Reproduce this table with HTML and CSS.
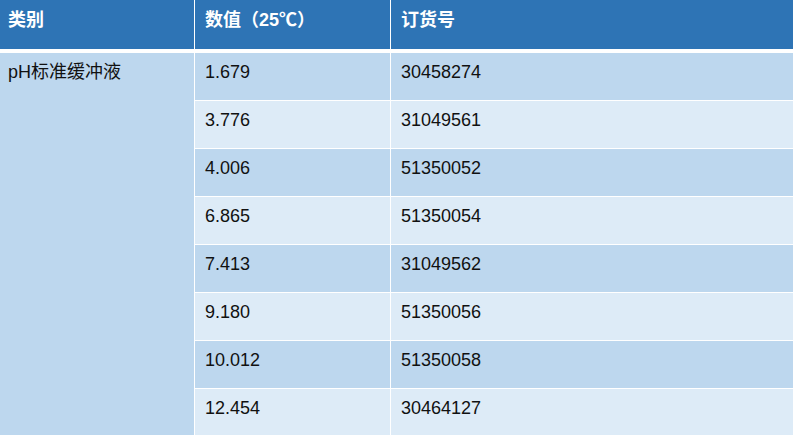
FILE: index.html
```html
<!DOCTYPE html>
<html lang="zh">
<head>
<meta charset="utf-8">
<link rel="stylesheet" href="styles.css">
</head>
<body>
<table class="grid">
  <colgroup>
    <col class="c1"><col class="c2"><col class="c3">
  </colgroup>
  <thead>
    <tr class="head">
      <th class="first">类别</th>
      <th>数值（25℃）</th>
      <th class="last">订货号</th>
    </tr>
  </thead>
  <tbody>
    <tr class="dark"><td class="cat first" rowspan="8">pH标准缓冲液</td><td>1.679</td><td class="last">30458274</td></tr>
    <tr class="light"><td>3.776</td><td class="last">31049561</td></tr>
    <tr class="dark"><td>4.006</td><td class="last">51350052</td></tr>
    <tr class="light"><td>6.865</td><td class="last">51350054</td></tr>
    <tr class="dark"><td>7.413</td><td class="last">31049562</td></tr>
    <tr class="light"><td>9.180</td><td class="last">51350056</td></tr>
    <tr class="dark"><td>10.012</td><td class="last">51350058</td></tr>
    <tr class="light"><td>12.454</td><td class="last">30464127</td></tr>
  </tbody>
</table>
</body>
</html>
```
FILE: styles.css
```css
html, body {
  margin: 0;
  padding: 0;
  background: #ffffff;
  overflow: hidden;
}
.grid {
  border-collapse: separate;
  border-spacing: 0;
  width: 793px;
  table-layout: fixed;
  font-family: "Liberation Sans", "Noto Sans CJK SC", sans-serif;
  font-size: 18px;
  color: #111111;
}
.c1 { width: 195px; }
.c2 { width: 196px; }
.c3 { width: 402px; }
.grid th, .grid td {
  text-align: left;
  vertical-align: top;
  border-right: 1px solid #ffffff;
  border-bottom: 1px solid #ffffff;
  padding: 0 0 0 10px;
  box-sizing: border-box;
}
.grid .first { padding-left: 8px; }
.grid .last { border-right: none; }
.head th {
  background: #2e74b5;
  color: #ffffff;
  font-weight: bold;
  height: 53px;
  padding-top: 5px;
  border-bottom: 4px solid #ffffff;
  font-family: "Liberation Sans", "Noto Sans CJK SC", sans-serif;
}
.grid tbody td {
  height: 48px;
  padding-top: 9px;
  line-height: 21px;
}
.dark td { background: #bdd7ee; }
.light td { background: #ddebf7; }
.grid td.cat { background: #bdd7ee; }
```
